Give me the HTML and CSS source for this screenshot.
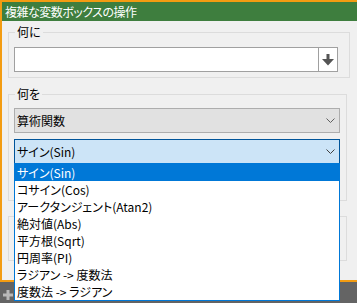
FILE: index.html
```html
<!DOCTYPE html>
<html lang="ja">
<head>
  <meta charset="UTF-8" />
  <title>複雑な変数ボックスの操作</title>
  <link rel="stylesheet" href="styles.css">
</head>
<body>
  <div class="window">
    <div class="titlebar">複雑な変数ボックスの操作</div>
    <div class="content">
      <fieldset class="group group-target">
        <legend>何に</legend>
        <div class="picker">
          <div class="picker-field"></div>
          <div class="picker-btn">
            <svg width="12" height="12" viewBox="0 0 12 12"><path d="M4.5 0H7.5V5H12L6 11.5L0 5H4.5Z" fill="#555"/></svg>
          </div>
        </div>
      </fieldset>

      <fieldset class="group group-op">
        <legend>何を</legend>
        <div class="combo">
          <span>算術関数</span>
          <svg width="9" height="5" viewBox="0 0 9 5"><polyline points="0.5,0.5 4.5,4.5 8.5,0.5" fill="none" stroke="#606060" stroke-width="1"/></svg>
        </div>
        <div class="combo combo-open">
          <span>サイン(Sin)</span>
          <svg width="9" height="5" viewBox="0 0 9 5"><polyline points="0.5,0.5 4.5,4.5 8.5,0.5" fill="none" stroke="#404040" stroke-width="1"/></svg>
        </div>
      </fieldset>

      <div class="group group-extra"></div>
    </div>
  </div>

  <div class="statusbar">
    <svg width="10" height="10" viewBox="0 0 10 10"><path d="M3.5 0H6.5V3.5H10V6.5H6.5V10H3.5V6.5H0V3.5H3.5Z" fill="#b8b8b8"/></svg>
  </div>

  <!-- liste déroulante ouverte -->
  <ul class="dropdown">
    <li class="selected">サイン(Sin)</li>
    <li>コサイン(Cos)</li>
    <li>アークタンジェント(Atan2)</li>
    <li>絶対値(Abs)</li>
    <li>平方根(Sqrt)</li>
    <li>円周率(PI)</li>
    <li>ラジアン -&gt; 度数法</li>
    <li>度数法 -&gt; ラジアン</li>
  </ul>
</body>
</html>
```

FILE: styles.css
```css
  body {
    font-family: "Noto Sans CJK JP", "Noto Sans", sans-serif;
    font-size: 12px;
    font-feature-settings: "palt";
    background: #646464;
    color: #000;
    margin: 0;
    overflow: hidden;
  }

  .window {
    width: 355px;
    border: 2px solid #f39c12;
    border-right: none;
    background: #f0f0f0;
  }

  .titlebar {
    height: 19px;
    line-height: 19px;
    padding-left: 3px;
    letter-spacing: -0.5px;
    background: #3e7e3e;
    color: white;
  }

  .content {
    height: 255px;
    padding-left: 6px;
    box-sizing: border-box;
  }

  .group {
    border: 1px solid #dcdcdc;
    margin: 0;
    padding: 0 0 0 5px;
    box-sizing: border-box;
    min-width: 0;
  }

  .group legend {
    padding: 0 2px;
    margin-left: 1px;
    line-height: 14px;
  }

  .group-target {
    width: 342px;
    margin-top: 4px;
    padding-bottom: 5px;
  }

  .group-op {
    width: 339px;
    margin-top: 9px;
    padding-bottom: 36px;
  }

  .group-extra {
    width: 339px;
    height: 45px;
    margin-top: 15px;
  }

  .picker {
    display: flex;
    width: 324px;
    height: 25px;
    margin-top: 8px;
    border: 1px solid #a0a0a0;
    box-sizing: border-box;
    background: white;
  }

  .picker-field { flex: 1; }

  .picker-btn {
    width: 18px;
    border-left: 1px solid #a0a0a0;
    display: flex;
    align-items: center;
    justify-content: center;
  }

  .combo {
    display: flex;
    align-items: center;
    justify-content: space-between;
    width: 326px;
    height: 25px;
    padding: 0 4px 0 2px;
    border: 1px solid #adadad;
    background: #e1e1e1;
    box-sizing: border-box;
    margin-top: 7px;
  }

  .combo + .combo { margin-top: 6px; }

  .combo-open {
    background: #cce4f7;
    border-color: #005499;
  }

  .statusbar {
    height: 25px;
    padding: 8px 0 0 3px;
    box-sizing: border-box;
  }

  .statusbar svg { display: block; }

  .dropdown {
    position: absolute;
    top: 163px;
    left: 14px;
    width: 326px;
    margin: 0;
    padding: 0;
    list-style: none;
    background: white;
    border: 1px solid #0078d7;
    box-sizing: border-box;
  }

  .dropdown li {
    height: 17px;
    line-height: 17px;
    padding-left: 2px;
  }

  .dropdown li.selected {
    background: #0078d7;
    color: white;
  }
```
